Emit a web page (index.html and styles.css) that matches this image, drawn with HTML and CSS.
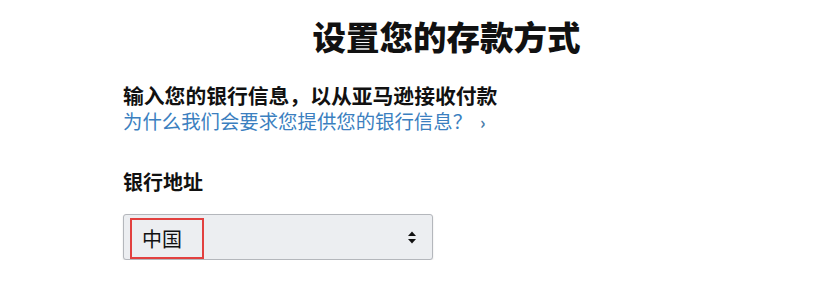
FILE: index.html
```html
<!DOCTYPE html>
<html lang="zh-CN">
<head>
<meta charset="utf-8">
<title>设置您的存款方式</title>
<link rel="stylesheet" href="styles.css">
</head>
<body>
<main class="page">
  <h1 class="title">设置您的存款方式</h1>
  <p class="lead">输入您的银行信息，以从亚马逊接收付款</p>
  <a class="why" href="#">为什么我们会要求您提供您的银行信息？<span class="chev">›</span></a>
  <div class="label">银行地址</div>
  <div class="select">
    <span class="value">中国</span>
    <svg class="arrows" width="10" height="15" viewBox="0 0 10 15" aria-hidden="true">
      <path d="M1 6 L5 1.5 L9 6 Z" fill="#111"/>
      <path d="M1 9 L9 9 L5 13.5 Z" fill="#111"/>
    </svg>
  </div>
</main>
</body>
</html>
```

FILE: styles.css
```css
html, body {
  margin: 0;
  padding: 0;
  background: #ffffff;
}
body {
  font-family: "Noto Sans CJK SC", "Noto Sans", sans-serif;
  color: #111111;
}
.page {
  width: 647px;
  padding: 16px 0 0 123px;
  display: flex;
  flex-direction: column;
  align-items: flex-start;
}
.title {
  align-self: stretch;
  margin: 0;
  text-align: center;
  font-size: 33.5px;
  line-height: 40px;
  font-weight: 900;
  color: #111111;
}
.lead {
  margin: 28px 0 0 0;
  font-size: 20.8px;
  line-height: 22px;
  font-weight: 700;
  color: #111111;
}
.why {
  margin-top: 4px;
  font-size: 19.4px;
  line-height: 22px;
  color: #3b7fc0;
  text-decoration: none;
}
.chev {
  margin-left: 8px;
  font-size: 17px;
  font-weight: 700;
  color: #4a7ca8;
}
.label {
  margin-top: 37px;
  font-size: 20px;
  line-height: 24px;
  font-weight: 700;
}
.select {
  box-sizing: border-box;
  margin-top: 20px;
  width: 310px;
  height: 46px;
  border: 1px solid #b4b7bc;
  border-radius: 3px;
  background: #eceef1;
  box-shadow: 0 1px 2px rgba(0, 0, 0, 0.12);
  display: flex;
  align-items: flex-end;
  justify-content: space-between;
  padding-left: 6px;
  padding-right: 15px;
}
.value {
  box-sizing: border-box;
  width: 74px;
  height: 41px;
  border: 2px solid #e2403f;
  padding-left: 10px;
  font-size: 20px;
  line-height: 37px;
  color: #111111;
}
.arrows {
  align-self: center;
  margin-top: 1px;
}
```
